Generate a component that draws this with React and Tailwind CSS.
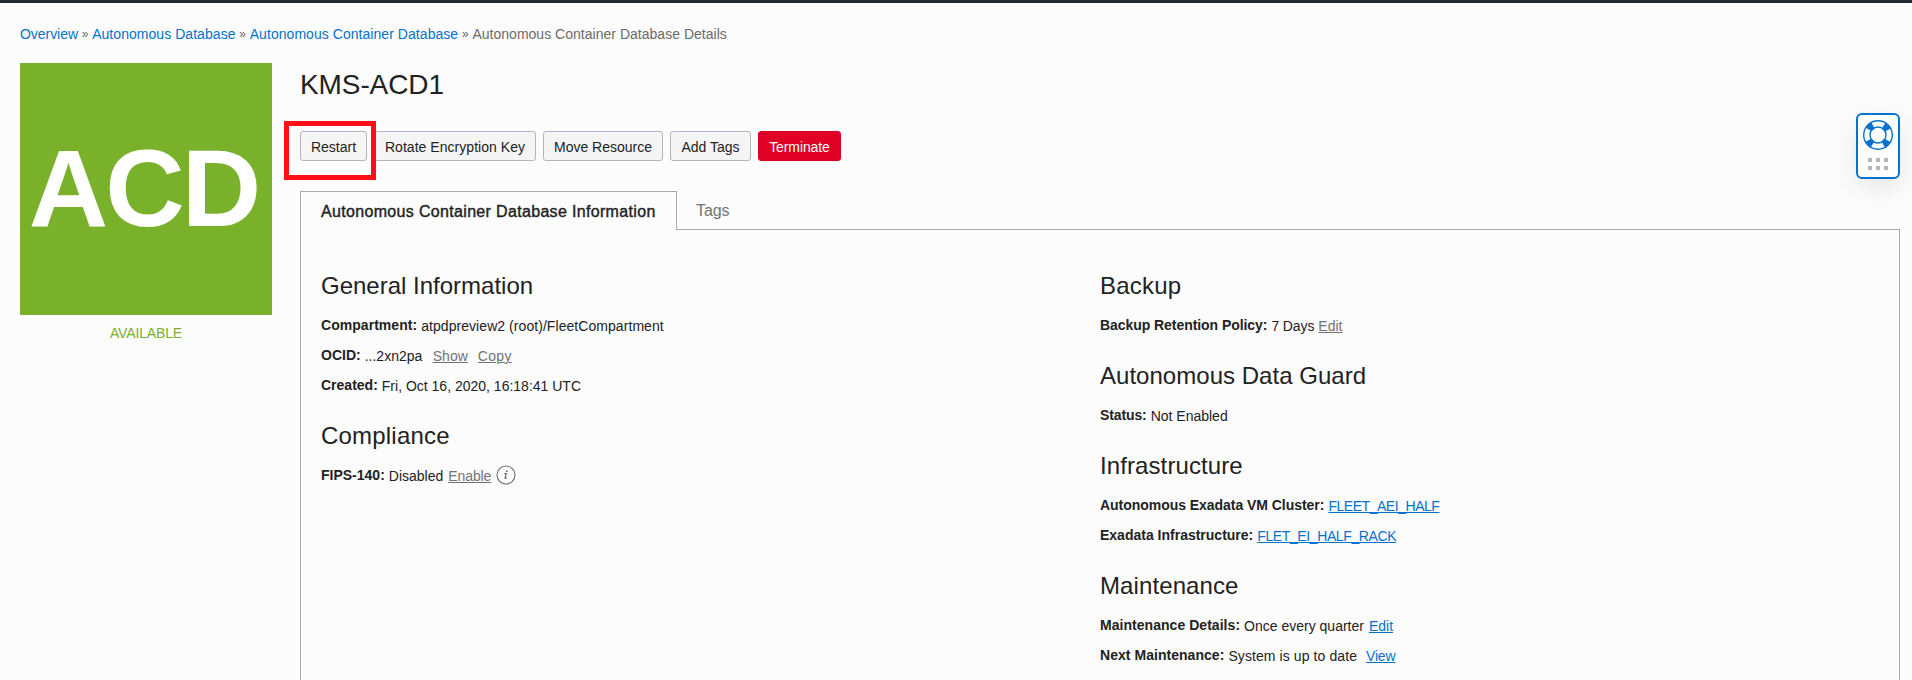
import React from 'react';

function Heading({ children, className = '' }) {
  return (
    <h2 className={`h-[60px] pt-4 text-[24px] leading-[40px] ${className || 'tracking-[0.1px]'}`}>{children}</h2>
  );
}

function Row({ label, labelClass = '', children }) {
  return (
    <div className="flex h-[30px] whitespace-pre leading-[30px]">
      <span className={`font-bold ${labelClass}`}>{label}:</span>
      <span className="flex pl-[4px] pt-px">{children}</span>
    </div>
  );
}

function Link({ children, className = '', muted = false }) {
  return (
    <a
      href="#"
      className={`underline decoration-1 underline-offset-1 [text-decoration-skip-ink:auto] ${muted ? 'text-[#737373]' : 'text-[#0572ce]'} ${className}`}
    >
      {children}
    </a>
  );
}

function Button({ children, className = '' }) {
  return (
    <button
      className={`h-[30px] whitespace-nowrap rounded-[3px] border border-[#b1b6bd] bg-[#f5f5f5] pt-px text-center leading-[29px] ${className}`}
    >
      {children}
    </button>
  );
}

function LifeRing() {
  return (
    <svg width="32" height="32" viewBox="-16 -16 32 32" fill="none" stroke="#0572ce">
      <circle r="11" stroke="#0572ce" strokeWidth="7.5" strokeDasharray="6 11.28" strokeDashoffset="-5.64" />
      <circle r="14.3" strokeWidth="1.4" />
      <circle r="8" strokeWidth="1.4" />
    </svg>
  );
}

function InfoIcon() {
  return (
    <svg width="20" height="20" viewBox="0 0 20 20" className="ml-[5px] mt-[4px]" fill="none" stroke="#6b6b6b">
      <circle cx="10" cy="10" r="9" strokeWidth="1.1" />
      <path d="M8.3 8.6h2l-1.2 4.3c-.1.7.6.7 1.7-.3" strokeWidth="1.2" />
      <circle cx="10.8" cy="6.2" r="0.9" fill="#6b6b6b" stroke="none" />
    </svg>
  );
}

function Breadcrumbs() {
  const sep = <span className="w-[14.2px] text-center text-[12px] text-[#666]">»</span>;
  return (
    <nav className="flex h-[30px] leading-[30px] tracking-[0.05px] text-[#0572ce]">
      <a href="#" className="tracking-[-0.05px]">Overview</a>
      {sep}
      <a href="#">Autonomous Database</a>
      {sep}
      <a href="#">Autonomous Container Database</a>
      {sep}
      <span className="tracking-[0.02px] text-[#6b6b6b]">Autonomous Container Database Details</span>
    </nav>
  );
}

export default function App() {
  return (
    <div className="relative h-[680px] overflow-hidden bg-[#fcfcfc] font-['Liberation_Sans',Arial,sans-serif] text-[14px] text-[#222]">
      <div className="h-[3px] bg-[#1f2a36]" />
      <div className="px-5 pt-4 pr-3">
        <Breadcrumbs />
        <div className="mt-[14px] flex gap-7">
          <aside className="w-[252px] shrink-0 text-center">
            <div className="h-[252px] bg-[#7ab12b] pr-[5px] text-[110px] font-bold leading-[249px] tracking-[-3px] text-white">
              ACD
            </div>
            <div className="h-[36px] leading-[36px] tracking-[-0.15px] text-[#7ab12b]">AVAILABLE</div>
          </aside>
          <main className="min-w-0 grow">
            <h1 className="h-[68px] pt-[2px] text-[28px] leading-[40px] tracking-[-0.1px]">KMS-ACD1</h1>
            <div className="flex gap-[7px]">
              <div className="relative flex">
                <Button className="w-[67px]">Restart</Button>
                <div className="absolute -left-4 -top-[10px] h-[59px] w-[92px] border-[5px] border-[#ff1017]" />
              </div>
              <Button className="w-[162px] tracking-[0.04px]">Rotate Encryption Key</Button>
              <Button className="w-[120px]">Move Resource</Button>
              <Button className="w-[81px]">Add Tags</Button>
              <Button className="w-[83px] border-[#e00024]! bg-[#e00024]! tracking-[-0.1px] text-white">Terminate</Button>
            </div>
            <div className="mt-[30px] flex h-[39px]">
              <div className="w-[377px] border border-b-0 border-[#aaa] pl-5 text-[16px] leading-[39px] tracking-[0.33px] [-webkit-text-stroke:0.4px_#222]">
                Autonomous Container Database Information
              </div>
              <div className="grow border-b border-[#aaa] pl-[19px] text-[16px] leading-[40px] tracking-[-0.1px] text-[#737373]">Tags</div>
            </div>
            <div className="grid h-[500px] grid-cols-[779px_1fr] border-x border-[#aaa] pl-5 pt-5">
              <section>
                <Heading className="tracking-[0px]">General Information</Heading>
                <Row label="Compartment" labelClass="tracking-[0.04px]">
                  <span className="tracking-[0.06px]">atpdpreview2 (root)/FleetCompartment</span>
                </Row>
                <Row label="OCID">
                  ...2xn2pa
                  <Link muted className="ml-[10.5px]">Show</Link>
                  <Link muted className="ml-[10px] tracking-[0.3px]">Copy</Link>
                </Row>
                <Row label="Created">Fri, Oct 16, 2020, 16:18:41 UTC</Row>
                <Heading className="tracking-[0.2px]">Compliance</Heading>
                <Row label="FIPS-140">
                  Disabled
                  <Link muted className="ml-[5px] tracking-[-0.1px]">Enable</Link>
                  <InfoIcon />
                </Row>
              </section>
              <section>
                <Heading className="tracking-[0.2px]">Backup</Heading>
                <Row label="Backup Retention Policy" labelClass="tracking-[-0.06px]">
                  <span className="tracking-[-0.1px]">7 Days</span>
                  <Link muted className="ml-[4px]">Edit</Link>
                </Row>
                <Heading className="tracking-[0.03px]">Autonomous Data Guard</Heading>
                <Row label="Status" labelClass="tracking-[-0.12px]">Not Enabled</Row>
                <Heading>Infrastructure</Heading>
                <Row label="Autonomous Exadata VM Cluster" labelClass="tracking-[-0.04px]">
                  <Link className="tracking-[-0.46px]">FLEET_AEI_HALF</Link>
                </Row>
                <Row label="Exadata Infrastructure">
                  <Link className="tracking-[-0.39px]">FLET_EI_HALF_RACK</Link>
                </Row>
                <Heading>Maintenance</Heading>
                <Row label="Maintenance Details" labelClass="tracking-[0.04px]">
                  Once every quarter<Link className="ml-[5px]">Edit</Link>
                </Row>
                <Row label="Next Maintenance" labelClass="tracking-[0.04px]">
                  <span className="tracking-[0.09px]">System is up to date</span>
                  <Link className="ml-[9px] tracking-[-0.2px]">View</Link>
                </Row>
              </section>
            </div>
          </main>
        </div>
      </div>
      <div className="absolute right-3 top-[113px] flex h-[66px] w-[44px] flex-col items-center rounded-[6px] border-2 border-[#0572ce] bg-white pt-[4px] shadow-[0_8px_24px_rgba(0,0,0,0.09)]">
        <LifeRing />
        <div className="mt-[7px] grid grid-cols-3 gap-1">
          {[0, 1, 2, 3, 4, 5].map((i) => (
            <span key={i} className="size-1 bg-[#b3b6bb]" />
          ))}
        </div>
      </div>
    </div>
  );
}
